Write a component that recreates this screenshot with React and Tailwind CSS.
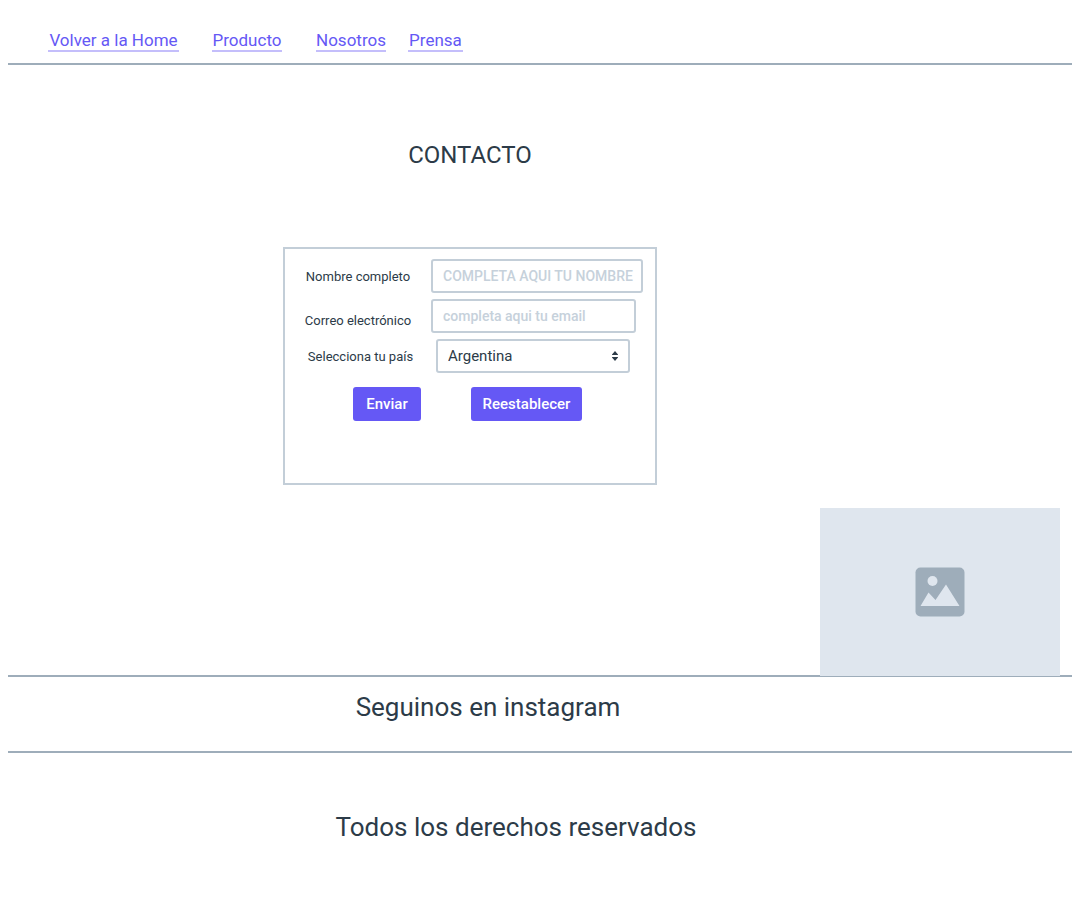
const links = [
  { label: "Volver a la Home", box: "w-[131px] mr-[33px]" },
  { label: "Producto", box: "w-[70px] mr-[34px]" },
  { label: "Nosotros", box: "w-[70px] mr-[22px]" },
  { label: "Prensa", box: "w-[55px]" },
];

const label = "shrink-0 text-center text-[13px] leading-4";
const field =
  "h-[34px] rounded-[3px] border-2 border-[#c3ced8] bg-white pl-2.5 pr-1 outline-none focus:border-[#6558f5]";
const textField = `${field} text-sm font-medium placeholder:text-[#c6d1db]`;
const button =
  "h-[34px] rounded-[3px] bg-[#6558f5] text-[15px] font-medium text-white";

function PictureIcon() {
  return (
    <svg width="50" height="50" viewBox="0 0 50 50" aria-hidden="true">
      <rect x="0.5" y="0.5" width="49" height="49" rx="5" fill="#9eadba" />
      <circle cx="17.5" cy="14" r="5" fill="#dfe6ee" />
      <path d="M5.5 39 13.5 25.5 20.5 33 31 17.5 44.5 39Z" fill="#dfe6ee" />
    </svg>
  );
}

export default function App() {
  return (
    <div className="min-h-screen bg-white px-2 font-[Roboto,'Liberation_Sans',sans-serif] text-[#2c3b48]">
      <header className="border-b-2 border-[#9eadba] pt-[30px] pb-[11px] pl-10">
        <nav className="flex text-[17px] text-[#6558f5]">
          {links.map((l) => (
            <a
              key={l.label}
              href="#"
              className={`${l.box} shrink-0 whitespace-nowrap border-b-2 border-[#c4befb] text-center leading-5`}
            >
              {l.label}
            </a>
          ))}
        </nav>
      </header>

      <main className="border-b-2 border-[#9eadba]">
        <div className="flex flex-col items-center pt-[74px] pr-[140px]">
          <h1 className="text-2xl leading-8">CONTACTO</h1>
          <form
            className="mt-[76px] flex h-[238px] w-[374px] flex-col gap-1.5 border-2 border-[#c3ced8] pt-2.5"
            onSubmit={(e) => e.preventDefault()}
          >
            <div className="flex items-center">
              <label htmlFor="nombre" className={`${label} w-[146px] pt-0.5`}>
                Nombre completo
              </label>
              <input
                id="nombre"
                type="text"
                placeholder="COMPLETA AQUI TU NOMBRE"
                className={`${textField} w-[212px]`}
              />
            </div>
            <div className="flex items-center">
              <label htmlFor="email" className={`${label} w-[146px] pt-2.5`}>
                Correo electrónico
              </label>
              <input
                id="email"
                type="email"
                placeholder="completa aqui tu email"
                className={`${textField} w-[205px]`}
              />
            </div>
            <div className="flex items-center">
              <label htmlFor="pais" className={`${label} w-[151px] pt-0.5`}>
                Selecciona tu país
              </label>
              <div className="relative">
                <select id="pais" className={`${field} w-[194px] appearance-none text-[15px]`}>
                  <option>Argentina</option>
                </select>
                <svg
                  className="pointer-events-none absolute top-3 right-3"
                  width="6"
                  height="10"
                  viewBox="0 0 6 10"
                  fill="#2c3b48"
                  aria-hidden="true"
                >
                  <path d="M3 0 6 3.5V4H0V3.5ZM3 10 6 6.5V6H0V6.5Z" />
                </svg>
              </div>
            </div>
            <div className="mt-2 flex gap-[50px] pl-[68px]">
              <button type="submit" className={`${button} w-[68px]`}>Enviar</button>
              <button type="reset" className={`${button} w-[111px]`}>Reestablecer</button>
            </div>
          </form>
        </div>
        <div
          role="img"
          aria-label="Imagen"
          className="relative mt-[23px] mr-3 -mb-px ml-auto flex h-[168px] w-60 items-center justify-center bg-[#dfe6ee]"
        >
          <PictureIcon />
        </div>
      </main>

      <section className="border-b-2 border-[#9eadba] pt-[14px] pr-[104px] pb-7 text-center">
        <h2 className="text-[26px] leading-8">Seguinos en instagram</h2>
      </section>

      <footer className="pt-[58px] pr-12 pb-16 text-center">
        <p className="text-[26px] leading-8">Todos los derechos reservados</p>
      </footer>
    </div>
  );
}
